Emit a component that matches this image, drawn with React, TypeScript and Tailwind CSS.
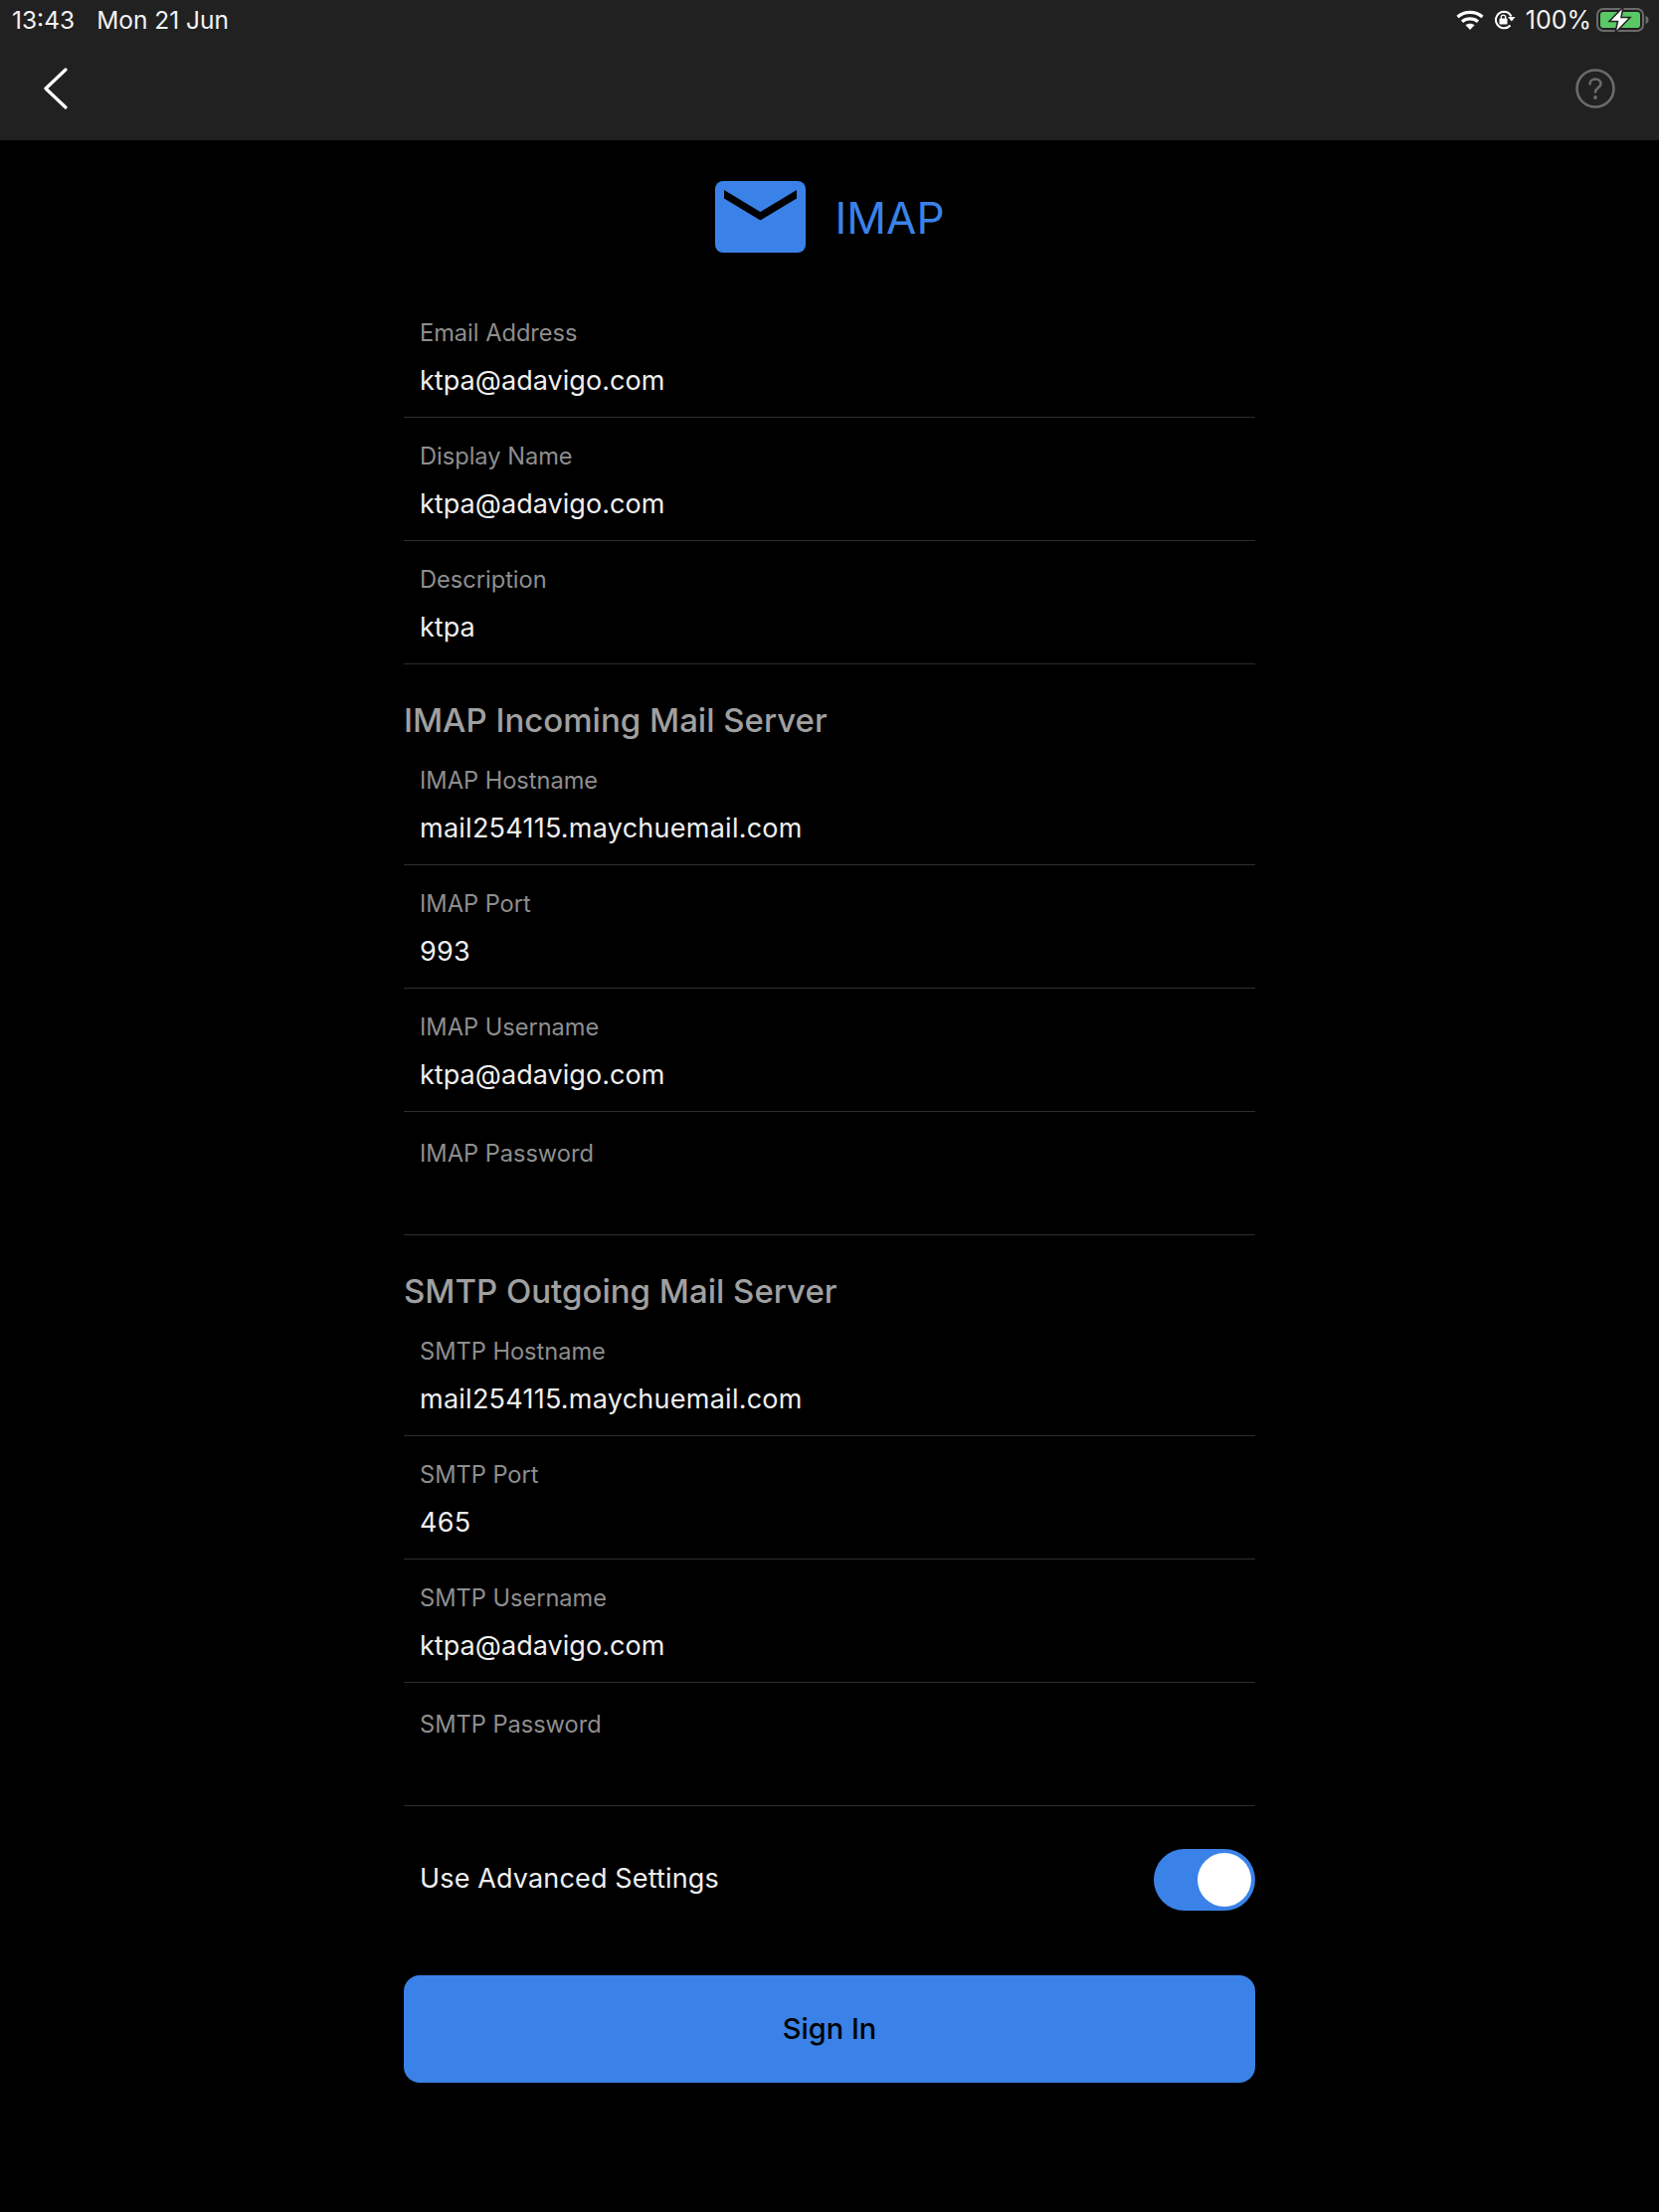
import React from "react";

const ACCOUNT_FIELDS = [
  { label: "Email Address", value: "ktpa@adavigo.com" },
  { label: "Display Name", value: "ktpa@adavigo.com" },
  { label: "Description", value: "ktpa" },
];

const IMAP_FIELDS = [
  { label: "IMAP Hostname", value: "mail254115.maychuemail.com", numeric: true },
  { label: "IMAP Port", value: "993", numeric: true },
  { label: "IMAP Username", value: "ktpa@adavigo.com" },
  { label: "IMAP Password", value: "" },
];

const SMTP_FIELDS = [
  { label: "SMTP Hostname", value: "mail254115.maychuemail.com", numeric: true },
  { label: "SMTP Port", value: "465", numeric: true },
  { label: "SMTP Username", value: "ktpa@adavigo.com" },
  { label: "SMTP Password", value: "" },
];

function Field({ label, value, numeric }: { label: string; value: string; numeric?: boolean }) {
  return (
    <div className={`h-[124px] border-b border-[#2e2e2e] px-4 ${value ? "pt-[23px]" : "pt-[26px]"}`}>
      <div className="h-[32px] text-[23.6px] leading-[32px] text-[#8e8e8e]">{label}</div>
      <div className={`mt-[16px] h-[32px] text-[27px] leading-[32px] text-[#efefef] ${numeric ? "tracking-[0.25px]" : "tracking-[0.05px]"}`}>
        {value}
      </div>
    </div>
  );
}

function SectionTitle({ children }: { children: React.ReactNode }) {
  return (
    <h2 className="h-[78px] pt-[27px] text-[33px] leading-[58px] font-medium text-[#a0a0a0]">{children}</h2>
  );
}

function StatusIcons() {
  return (
    <div className="flex items-center">
      <svg width="28" height="20" viewBox="0 0 28 20" className="mr-[10px]" fill="none" stroke="#fff">
        <path d="M1.500 7C8.500 .8 19.500 .8 26.500 7" strokeWidth="3.200" />
        <path d="M6 11.800C10.500 8 17.500 8 22 11.800" strokeWidth="3.200" />
        <path d="M14 20l-4.500-4.800c2.500-2 6.500-2 9 0z" fill="#fff" stroke="none" />
      </svg>
      <svg width="22" height="20" viewBox="0 0 22 20" className="mr-[10px]" fill="none">
        <path d="M16.500 15.500A8.300 8.300 0 1 1 10 1.700c3.500 0 6 1.800 7.500 4.800" stroke="#fff" strokeWidth="2" />
        <path d="M14 7h7.500l-3.700 4.500z" fill="#fff" />
        <rect x="5.500" y="8.500" width="8" height="6" rx="1" fill="#fff" />
        <path d="M7.300 9V7.300a2.200 2.200 0 0 1 4.400 0V9" stroke="#fff" strokeWidth="1.300" />
      </svg>
      <span className="mr-[5px] text-[25px] leading-[28px] text-[#f2f2f2]">100%</span>
      <svg width="54" height="26" viewBox="0 0 54 26" fill="none">
        <rect x="1" y="2" width="46" height="22" rx="6" stroke="#6b6b6b" strokeWidth="2" />
        <rect x="4" y="5" width="40" height="16" rx="3" fill="#5ac864" />
        <path d="M49.500 9c2 .6 3 2 3 4s-1 3.400-3 4z" fill="#6b6b6b" />
        <path d="M27 0 L13 14.500 H21.500 L19 26 L34 10.500 H25 Z" fill="#fff" stroke="#212121" strokeWidth="1.500" />
      </svg>
    </div>
  );
}

export default function App() {
  return (
    <div className="flex h-[2224px] flex-col bg-black font-['Inter',sans-serif]">
      <header className="h-[141px] bg-[#212121]">
        <div className="flex h-[40px] items-center justify-between pr-[9px] pl-[12px]">
          <div className="flex items-center text-[24.5px] text-[#f2f2f2]">
            <span>13:43</span>
            <span className="ml-[22px]">Mon 21 Jun</span>
          </div>
          <StatusIcons />
        </div>
        <div className="flex items-center justify-between pt-[28px] pr-[44px] pl-[44px]">
          <svg width="24" height="42" viewBox="0 0 24 42" fill="none" stroke="#fff" strokeWidth="3.200" strokeLinecap="round" strokeLinejoin="round">
            <path d="M22 2 2 21l20 19" />
          </svg>
          <svg width="40" height="40" viewBox="0 0 40 40" fill="none">
            <circle cx="20" cy="20" r="18.500" stroke="#6b6b6b" strokeWidth="2.600" />
            <path d="M14.500 15.500c0-3 2.400-5 5.500-5s5.500 1.900 5.500 4.700c0 4-5.500 4.300-5.500 8.300" stroke="#6b6b6b" strokeWidth="2.600" strokeLinecap="round" />
            <circle cx="20" cy="29" r="1.900" fill="#6b6b6b" />
          </svg>
        </div>
      </header>

      <main className="mx-auto w-[856px]">
        <div className="flex h-[155px] items-start justify-center pt-[41px]">
          <svg width="91" height="72" viewBox="0 0 91 72" className="ml-[1px] mr-[29px]">
            <rect width="91" height="72" rx="8" fill="#3a82e8" />
            <path d="M9 9 45.500 31 82 9v8.500L45.500 39.500 9 17.500z" fill="#000" />
          </svg>
          <span className="mt-[11px] text-[44px] leading-[53px] text-[#3a82e8]">IMAP</span>
        </div>

        {ACCOUNT_FIELDS.map((f) => (
          <Field key={f.label} {...f} />
        ))}
        <SectionTitle>IMAP Incoming Mail Server</SectionTitle>
        {IMAP_FIELDS.map((f) => (
          <Field key={f.label} {...f} />
        ))}
        <SectionTitle>SMTP Outgoing Mail Server</SectionTitle>
        {SMTP_FIELDS.map((f) => (
          <Field key={f.label} {...f} />
        ))}

        <div className="flex h-[147px] items-center justify-between pl-4">
          <span className="text-[27px] tracking-[0.15px] text-[#efefef]">Use Advanced Settings</span>
          <div className="flex h-[62px] w-[102px] items-center justify-end rounded-full bg-[#3a82e8] pr-[4px]">
            <div className="h-[54px] w-[54px] rounded-full bg-white" />
          </div>
        </div>

        <button className="mt-[23px] flex h-[108px] w-full items-center justify-center rounded-[16px] bg-[#3a82e8] text-[29px] font-medium text-black">
          Sign In
        </button>
      </main>
    </div>
  );
}
